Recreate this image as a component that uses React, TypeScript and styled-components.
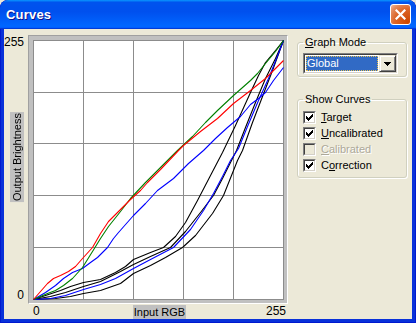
import React from 'react';
import styled, { createGlobalStyle } from 'styled-components';

const GlobalStyle = createGlobalStyle`
  html, body {
    margin: 0;
    padding: 0;
    background: #ece9d8;
  }
  body {
    font-family: "Liberation Sans", Arial, sans-serif;
    font-size: 11px;
    color: #000;
  }
`;

const Window = styled.div`
  width: 416px;
  height: 323px;
  display: flex;
  flex-direction: column;
  background: #0831d9;
  border-radius: 8px 8px 0 0;
  box-shadow: inset 1px 0 0 #0019cf, inset -1px 0 0 #0019cf, inset 0 -1px 0 #0019cf;
  overflow: hidden;
`;

const TitleBar = styled.div`
  height: 29px;
  flex: none;
  display: flex;
  align-items: center;
  justify-content: space-between;
  padding: 0 5px 0 6px;
  background: linear-gradient(180deg, #0997ff 0%, #0053ee 8%, #0050ee 40%, #0066ff 88%, #0066ff 93%, #005bff 95%, #003dd7 96%, #003dd7 100%);
  border-radius: 8px 8px 0 0;
`;

const Title = styled.span`
  color: #fff;
  font: bold 13px "Liberation Sans", Arial, sans-serif;
  letter-spacing: 0.2px;
  text-shadow: 1px 1px 0 #0f1089;
`;

const CloseButton = styled.div`
  width: 21px;
  height: 21px;
  box-sizing: border-box;
  border: 1px solid #fff;
  border-radius: 3px;
  background: radial-gradient(circle at 90% 90%, #cc4600 0%, #dc6527 55%, #e38a5c 80%, #f3b99c 100%);
  display: flex;
  align-items: center;
  justify-content: center;
`;

const Body = styled.div`
  flex: 1;
  margin: 0 4px 4px;
  background: #ece9d8;
  display: flex;
`;

const GraphArea = styled.div`
  display: grid;
  grid-template-columns: 24px 260px;
  grid-template-rows: 269px 15px;
  padding-top: 6px;
`;

const YAxis = styled.div`
  display: flex;
  flex-direction: column;
  align-items: flex-end;
  padding-right: 4px;
  padding-bottom: 2px;
  font-size: 12px;
  line-height: 14px;
`;

const AxisLabel = styled.div`
  background: #c0c0c0;
  font-size: 11px;
  line-height: 14px;
  white-space: nowrap;
`;

const VerticalLabel = styled(AxisLabel)`
  writing-mode: vertical-rl;
  transform: rotate(180deg);
  margin-top: 63px;
  padding: 1px 0;
  width: 14px;
  text-align: center;
`;

const Bottom = styled.div`
  margin-top: auto;
`;

const Frame = styled.div`
  border: 1px solid;
  border-color: #a0a0a0 #fff #fff #a0a0a0;
  background: #c0c0c0;
  padding: 4px 3px 3px 4px;
  display: flex;
`;

const XAxis = styled.div`
  display: grid;
  grid-template-columns: 1fr auto 1fr;
  align-items: center;
  font-size: 12px;
  line-height: 13px;
  padding: 0 2px 0 5px;
`;

const XEnd = styled.span<{ $right?: boolean }>`
  justify-self: ${(p) => (p.$right ? 'end' : 'start')};
`;

const HorizontalLabel = styled(AxisLabel)`
  padding: 0 1px;
  margin-top: 1px;
`;

const Panel = styled.div`
  width: 110px;
  padding: 7px 0 0 9px;
  display: flex;
  flex-direction: column;
`;

const Group = styled.fieldset<{ $gap?: number }>`
  margin: ${(p) => p.$gap ?? 0}px 0 0;
  padding: 0 5px 2px;
  border: 1px solid #d0d0bf;
  border-radius: 3px;
  box-shadow: 1px 1px 0 #fff, inset 1px 1px 0 #fff;
  min-width: 0;
`;

const Legend = styled.legend`
  padding: 0 2px;
  font-size: 11px;
  line-height: 13px;
`;

const Combo = styled.div`
  margin-top: 4px;
  width: 95px;
  height: 21px;
  box-sizing: border-box;
  border: 1px solid;
  border-color: #808080 #fff #fff #808080;
  display: flex;
`;

const ComboInner = styled.div`
  flex: 1;
  display: flex;
  border: 1px solid;
  border-color: #404040 #d4d0c8 #d4d0c8 #404040;
  background: #fff;
`;

const ComboField = styled.div`
  flex: 1;
  margin: 1px;
  padding-left: 1px;
  background: #316ac5;
  color: #fff;
  outline: 1px dotted #e8c050;
  outline-offset: -1px;
  font-size: 11px;
  line-height: 15px;
`;

const ComboButton = styled.div`
  width: 17px;
  box-sizing: border-box;
  background: #ece9d8;
  border: 1px solid;
  border-color: #ece9d8 #404040 #404040 #ece9d8;
  box-shadow: inset 1px 1px 0 #fff, inset -1px -1px 0 #808080;
  display: flex;
  align-items: center;
  justify-content: center;
`;

const CheckRow = styled.div<{ $disabled?: boolean }>`
  display: flex;
  align-items: center;
  gap: 5px;
  height: 16px;
  color: ${(p) => (p.$disabled ? '#aca899' : '#000')};
  text-shadow: ${(p) => (p.$disabled ? '1px 1px 0 #fff' : 'none')};
`;

const CheckList = styled.div`
  padding: 3px 0 2px;
`;

const Box = styled.div`
  width: 13px;
  height: 13px;
  box-sizing: border-box;
  border: 1px solid;
  border-color: #808080 #fff #fff #808080;
  flex: none;
`;

const BoxInner = styled.div<{ $disabled?: boolean }>`
  width: 100%;
  height: 100%;
  box-sizing: border-box;
  border: 1px solid;
  border-color: #404040 #d4d0c8 #d4d0c8 #404040;
  background: ${(p) => (p.$disabled ? '#ece9d8' : '#fff')};
  display: flex;
  align-items: center;
  justify-content: center;
`;

const Key = styled.span`
  text-decoration: underline;
`;

type Pt = [number, number];

// curve points in window pixels; the plot's top-left corner is at (33, 40)
const ox = 33;
const oy = 40;

const curves: { color: string; pts: Pt[] }[] = [
  {
    color: '#000',
    pts: [[33,299],[45,295],[60,290],[70,286],[83,282],[100,279],[115,272],[125,266],[133,259],[150,252],[163,247],[175,236],[185,222],[197,200],[210,175],[222,152],[235,125],[250,92],[258,75],[265,62],[275,50],[283,40]],
  },
  {
    color: '#000',
    pts: [[33,299],[50,296],[65,292],[83,286],[100,281],[120,271],[133,264],[150,256],[170,247],[185,231],[200,212],[213,195],[222,178],[230,162],[236,150],[245,127],[255,102],[265,78],[275,58],[283,40]],
  },
  {
    color: '#000',
    pts: [[33,299],[55,298],[70,296],[83,293],[100,290],[120,283],[133,273],[150,265],[165,257],[182,247],[195,235],[212,213],[223,195],[231,175],[237,160],[242,150],[252,122],[262,96],[272,70],[283,40]],
  },
  {
    color: '#0000ff',
    pts: [[33,299],[50,298],[65,295],[83,289],[100,284],[115,278],[133,268],[150,259],[173,247],[190,229],[203,210],[213,193],[222,176],[230,160],[238,148],[247,126],[258,100],[268,78],[276,58],[283,40]],
  },
  {
    color: '#0000ff',
    pts: [[33,299],[45,292],[55,285],[63,278],[72,272],[82,268],[90,262],[97,257],[107,247],[113,238],[118,232],[133,215],[145,203],[157,190],[173,178],[188,163],[203,150],[215,138],[227,127],[240,116],[250,104],[258,98],[265,92],[273,80],[283,67]],
  },
  {
    color: '#008000',
    pts: [[33,299],[47,293],[55,290],[63,285],[72,278],[82,267],[92,251],[100,238],[108,226],[120,211],[130,198],[145,182],[160,167],[177,150],[192,136],[205,122],[217,110],[233,95],[250,80],[257,73],[265,63],[275,51],[283,40]],
  },
  {
    color: '#ff0000',
    pts: [[33,299],[40,291],[47,283],[53,278],[60,275],[68,271],[75,266],[82,258],[92,247],[100,233],[108,221],[118,211],[130,199],[140,190],[147,182],[160,169],[178,150],[183,145],[200,131],[217,118],[233,103],[250,90],[265,78],[283,60]],
  },
];

const gridX = [0, 50, 100, 150, 200, 250];
const gridY = [0, 52, 103, 155, 207, 259];

const Plot = () => (
  <svg width={251} height={260} viewBox="0 0 251 260" style={{ display: 'block', background: '#fff' }}>
    <g stroke="#8c8c8c" strokeWidth={1} shapeRendering="crispEdges">
      {gridX.map((x) => (
        <line key={`x${x}`} x1={x + 0.5} y1={0} x2={x + 0.5} y2={260} />
      ))}
      {gridY.map((y) => (
        <line key={`y${y}`} x1={0} y1={y + 0.5} x2={251} y2={y + 0.5} />
      ))}
    </g>
    {curves.map((c, i) => (
      <polyline
        key={i}
        fill="none"
        stroke={c.color}
        strokeWidth={1.1}
        strokeLinejoin="round"
        points={c.pts.map(([x, y]) => `${x - ox + 0.5},${y - oy + 0.5}`).join(' ')}
      />
    ))}
  </svg>
);

const Check = () => (
  <svg width={7} height={7} viewBox="0 0 7 7" shapeRendering="crispEdges">
    <path
      fill="#000"
      d="M6 0h1v1h-1z M5 1h2v1h-2z M0 2h1v1h-1z M4 2h3v1h-3z M0 3h2v1h-2z M3 3h3v1h-3z M0 4h5v1h-5z M1 5h3v1h-3z M2 6h1v1h-1z"
    />
  </svg>
);

const CheckItem = ({ checked, disabled, children }: { checked?: boolean; disabled?: boolean; children: React.ReactNode }) => (
  <CheckRow $disabled={disabled}>
    <Box>
      <BoxInner $disabled={disabled}>{checked && <Check />}</BoxInner>
    </Box>
    <span>{children}</span>
  </CheckRow>
);

const App = (): JSX.Element => (
  <>
    <GlobalStyle />
    <Window>
      <TitleBar>
        <Title>Curves</Title>
        <CloseButton>
          <svg width={11} height={11} viewBox="0 0 11 11">
            <path d="M1.5 1.5 L9.5 9.5 M9.5 1.5 L1.5 9.5" stroke="#fff" strokeWidth={2.2} strokeLinecap="square" />
          </svg>
        </CloseButton>
      </TitleBar>
      <Body>
        <GraphArea>
          <YAxis>
            <span>255</span>
            <VerticalLabel>Output Brightness</VerticalLabel>
            <Bottom>0</Bottom>
          </YAxis>
          <Frame>
            <Plot />
          </Frame>
          <div />
          <XAxis>
            <XEnd>0</XEnd>
            <HorizontalLabel>Input RGB</HorizontalLabel>
            <XEnd $right>255</XEnd>
          </XAxis>
        </GraphArea>
        <Panel>
          <Group>
            <Legend>
              <Key>G</Key>raph Mode
            </Legend>
            <Combo>
              <ComboInner>
                <ComboField>Global</ComboField>
                <ComboButton>
                  <svg width={7} height={4} viewBox="0 0 7 4" shapeRendering="crispEdges">
                    <path d="M0 0h7v1h-7z M1 1h5v1h-5z M2 2h3v1h-3z M3 3h1v1h-1z" fill="#000" />
                  </svg>
                </ComboButton>
              </ComboInner>
            </Combo>
          </Group>
          <Group $gap={16}>
            <Legend>Show Curves</Legend>
            <CheckList>
              <CheckItem checked>
                <Key>T</Key>arget
              </CheckItem>
              <CheckItem checked>
                <Key>U</Key>ncalibrated
              </CheckItem>
              <CheckItem disabled>
                <Key>C</Key>alibrated
              </CheckItem>
              <CheckItem checked>
                C<Key>o</Key>rrection
              </CheckItem>
            </CheckList>
          </Group>
        </Panel>
      </Body>
    </Window>
  </>
);

export default App;
